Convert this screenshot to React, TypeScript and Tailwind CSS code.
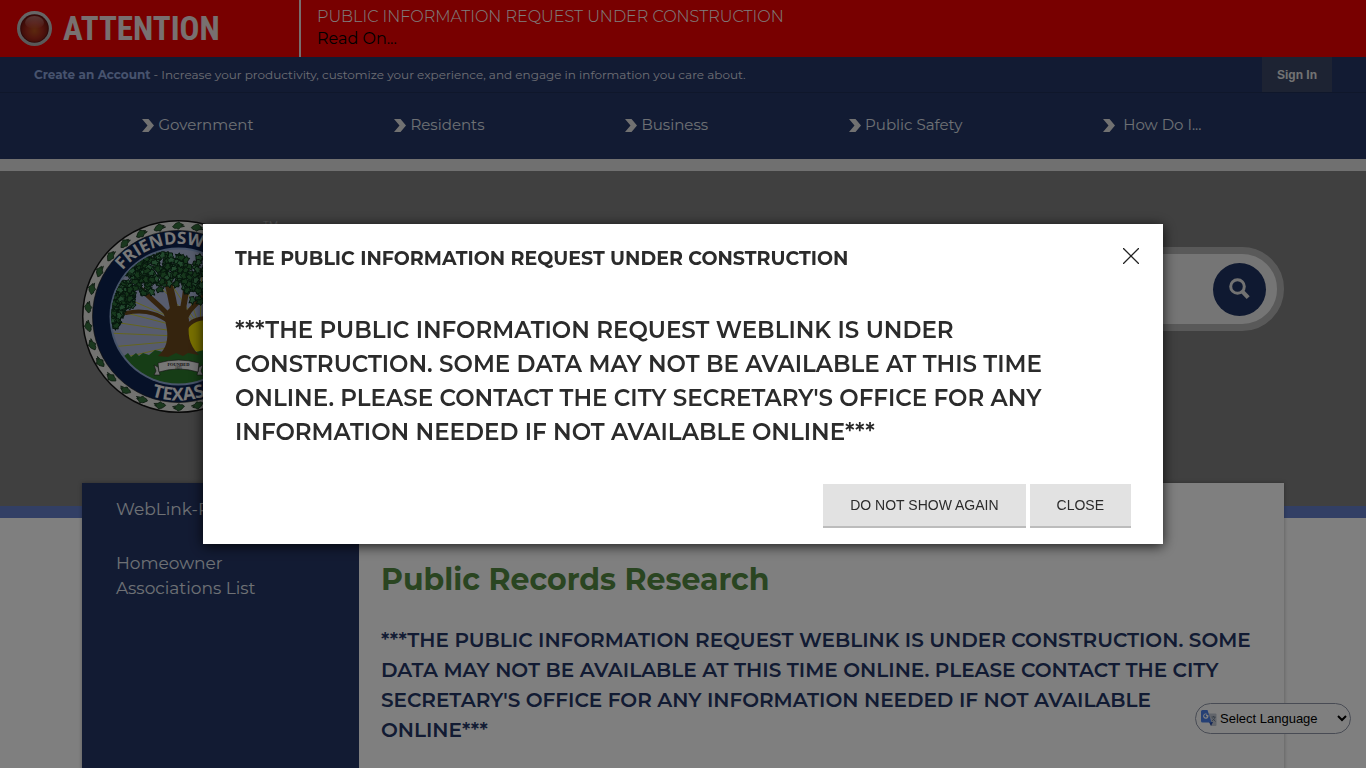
import React from "react";

const navItems = ["Government", "Residents", "Business", "Public Safety", "\u00a0How Do I..."];

const seeded = (seed: number) => {
  let s = seed;
  return () => {
    s = (s * 16807) % 2147483647;
    return s / 2147483647;
  };
};

const canopyShapes = [
  { x: 96, y: 48, rx: 50, ry: 18 },
  { x: 62, y: 56, rx: 28, ry: 18 },
  { x: 78, y: 46, rx: 30, ry: 16 },
  { x: 40, y: 78, rx: 12, ry: 16 },
  { x: 33, y: 95, rx: 6, ry: 11 },
  { x: 124, y: 66, rx: 22, ry: 20 },
  { x: 143, y: 76, rx: 18, ry: 18 },
];

const rand = seeded(77);
const leaves = Array.from({ length: 420 }, (_, i) => {
  const c = canopyShapes[i % canopyShapes.length];
  const a = rand() * Math.PI * 2;
  const r = Math.sqrt(rand());
  return {
    x: Math.round((c.x + Math.cos(a) * c.rx * r) * 10) / 10,
    y: Math.round((c.y + Math.sin(a) * c.ry * r) * 10) / 10,
    turn: Math.round(rand() * 360),
    fill: rand() > 0.45 ? "#2c6e38" : "#45905a",
  };
});

function Seal() {
  return (
    <svg viewBox="0 0 193 193" className="size-[193px] shrink-0" role="img" aria-label="Friendswood Texas city seal">
      <defs>
        <clipPath id="scene">
          <circle cx="96.5" cy="96.5" r="67" />
        </clipPath>
        <path id="arcTop" d="M24 96.5a72.5 72.5 0 0 1 145 0" />
        <path id="arcBottom" d="M12.5 96.5a84 84 0 0 0 168 0" />
      </defs>
      <circle cx="96.5" cy="96.5" r="96.5" fill="#111" />
      <circle cx="96.5" cy="96.5" r="95" fill="#e4e4e0" />
      {Array.from({ length: 30 }, (_, i) => (
        <g key={i} transform={`rotate(${i * 12} 96.5 96.5) translate(96.5 5.8)`}>
          <path d="M-6 1C-4-1-3-3-1-3L0-4 2-2.500 5-1 3-.5 6 .5 2 1.500 0 3.500-2 2.500-4 2.500z" fill="#35703c" stroke="#112b17" strokeWidth=".7" />
        </g>
      ))}
      <circle cx="96.5" cy="96.5" r="86" fill="#0d2350" stroke="#111" strokeWidth=".6" />
      <circle cx="96.5" cy="96.5" r="69" fill="#8fa8d4" />
      <g clipPath="url(#scene)">
        <rect width="193" height="193" fill="#aeb9da" />
        <g stroke="#c9c93c" strokeWidth="1">
          <path d="M118 115L25 101M118 117L25 113M118 119L28 127M118 120L40 138M118 112L25 88M118 110L30 72M118 108L62 50M118 108L80 50M118 108L98 50M118 108L120 50M118 108L150 50" />
        </g>
        <circle cx="122" cy="115" r="18" fill="#f0e000" />
        <path d="M20 137l8-3 3 2 2-5 3 4 3-3 3 4 4-3 3 4 5-4 3 3 4-3 6 2 6-5 8 2 8-3 10 1 8-1 7 3 8-2 4 4 8-3 4 3 5-3 5 4 12-2v50H20z" fill="#2c7a2c" />
        <g fill="none" stroke="#6b481c" strokeLinecap="round">
          <path d="M90 104C80 96 66 88 44 93" strokeWidth="4" />
          <path d="M90 100C82 88 72 82 60 70" strokeWidth="5" />
          <path d="M94 100C92 88 90 76 86 62" strokeWidth="8" />
          <path d="M99 100C101 86 105 74 104 62" strokeWidth="6" />
          <path d="M100 106C104 92 112 86 122 76" strokeWidth="5" />
          <path d="M102 112C106 102 114 98 126 98" strokeWidth="4" />
        </g>
        <path d="M76 136c9-8 10-17 9-26l-3-16 8-8h14l3 14c-1 14-1 24 10 35l-11-2-5 3-7-3-8 4z" fill="#6b481c" />
        {leaves.map((l, i) => (
          <path
            key={i}
            d="M-4 0L-2-1.500-1-3.500 1-2 4-2 2.500 0 3.500 2 0 2-2 3.500z"
            transform={`translate(${l.x} ${l.y}) rotate(${l.turn})`}
            fill={l.fill}
            stroke="#0c2a18"
            strokeWidth=".9"
          />
        ))}
        <path d="M72 145l4 2 2 8-6 0 2-4zM121 145l-4 2-2 8 6 0-2-4z" fill="#ddd" stroke="#222" strokeWidth=".6" />
        <path d="M76 143q20.500-6 41 0l-1 9q-19.500-6-39 0z" fill="#eee" stroke="#222" strokeWidth=".6" />
      </g>
      <text x="96.5" y="145.500" fontSize="4.500" fontWeight="700" textAnchor="middle" fill="#222" className="font-['Liberation_Serif',serif]">FOUNDED</text>
      <text x="96.5" y="149" fontSize="3.500" textAnchor="middle" fill="#222" className="font-['Liberation_Serif',serif]">1895</text>
      <g fill="#f2f2f2" fontWeight="700" className="font-['Open_Sans',sans-serif]">
        <text fontSize="17" textAnchor="middle">
          <textPath href="#arcTop" startOffset="50%">FRIENDSWOOD</textPath>
        </text>
        <text fontSize="18" textAnchor="middle">
          <textPath href="#arcBottom" startOffset="50%">TEXAS</textPath>
        </text>
      </g>
    </svg>
  );
}

function AlertBar() {
  return (
    <section className="flex h-[57px] bg-[#f00000]">
      <div className="flex w-[301px] shrink-0 items-center gap-[11px] border-r-2 border-[#f0dcdc] pl-[17px]">
        <svg viewBox="0 0 35 35" className="size-[35px]" aria-hidden="true">
          <defs>
            <radialGradient id="lamp" cx="50%" cy="58%" r="50%">
              <stop offset="0" stopColor="#b8521c" />
              <stop offset=".6" stopColor="#a52a1c" />
              <stop offset="1" stopColor="#7c1810" />
            </radialGradient>
            <linearGradient id="rim" x1="0" y1="0" x2="0" y2="1">
              <stop offset="0" stopColor="#d0d0d0" />
              <stop offset="1" stopColor="#b0b0b0" />
            </linearGradient>
            <linearGradient id="gloss" x1="0" y1="0" x2="0" y2="1">
              <stop offset="0" stopColor="#ffdada" stopOpacity=".45" />
              <stop offset="1" stopColor="#ffdada" stopOpacity="0" />
            </linearGradient>
          </defs>
          <circle cx="17.5" cy="17.5" r="17.5" fill="url(#rim)" />
          <circle cx="17.5" cy="17.5" r="14.300" fill="#5e1010" />
          <circle cx="17.5" cy="17.5" r="13.300" fill="url(#lamp)" />
          <ellipse cx="17.5" cy="11.500" rx="9.500" ry="6.500" fill="url(#gloss)" />
        </svg>
        <strong className="font-['Roboto_Condensed','Open_Sans',sans-serif] text-[33px] leading-none font-bold text-[#f0e0e0]">
          ATTENTION
        </strong>
      </div>
      <div className="flex flex-col pt-[6px] pl-4 text-[16px] leading-[22px]">
        <span className="font-light text-white">PUBLIC INFORMATION REQUEST UNDER CONSTRUCTION</span>
        <a href="#alert" className="text-black">Read On...</a>
      </div>
    </section>
  );
}

function Header() {
  return (
    <header className="bg-[#253666]">
      <div className="flex h-[36px] items-stretch justify-between border-b border-[#1f2e56] px-[34px]">
        <p className="flex items-center text-[12px] text-[#d8dbe4]">
          <span>
            <a href="#account" className="font-bold text-[#8fa6dc]">Create an Account</a> - Increase your productivity, customize your experience, and engage in information you care about.
          </span>
        </p>
        <button className="w-[70px] bg-[#3a4766] font-['Liberation_Sans',Arial,sans-serif] text-[12px] font-bold text-[#e6e6e6]">
          Sign In
        </button>
      </div>
      <nav className="flex h-[66px] items-center justify-around pr-[94px] pb-[2px] pl-[72px] text-[15px] text-[#dde0e8]">
        {navItems.map((label) => (
          <a key={label} href="#nav" className="flex items-center gap-1">
            <svg viewBox="0 0 12 13" className="h-[13px] w-[12px]" aria-hidden="true">
              <path d="M0 0h6.500L12 6.500 6.500 13H0l5.500-6.500z" fill="#e2e2e2" />
            </svg>
            {label}
          </a>
        ))}
      </nav>
      <div className="h-[12px] bg-[#e0e0e0]" />
    </header>
  );
}

function Banner() {
  return (
    <section className="h-[347px] border-b-[12px] border-[#657fcb] bg-[#808080]">
      <div className="mx-auto flex w-[88%] items-start pt-[49px]">
        <Seal />
        <span className="-ml-3 text-[10px] leading-none text-[#b8b8b8]" aria-hidden="true">TM</span>
        <form className="mt-[27px] ml-auto flex h-[84px] w-[600px] items-center rounded-full border-[7px] border-[#b3b3b3] bg-[#ebebeb] pr-[11px]">
          <input aria-label="Search" className="h-full min-w-0 grow bg-transparent px-8 text-lg outline-none" />
          <button type="button" aria-label="Submit search" className="flex size-[53px] shrink-0 items-center justify-center rounded-full bg-[#1e3262]">
            <svg viewBox="0 0 22 22" className="size-[22px]" fill="none" stroke="#e4e4e4" aria-hidden="true">
              <circle cx="8.500" cy="8.500" r="6.800" strokeWidth="3" />
              <path d="M13.200 13.400l6 6.200" strokeWidth="4.200" />
            </svg>
          </button>
        </form>
      </div>
    </section>
  );
}

function Content() {
  return (
    <main className="relative mx-auto -mt-[35px] flex min-h-[600px] w-[88%] bg-white shadow-[0_0_4px_rgba(0,0,0,0.3)]">
      <aside className="w-[277px] shrink-0 bg-[#253666] px-[34px] pt-[14px] text-[17px] leading-[25px] text-[#dfe2ea]">
        <ul className="flex flex-col gap-[29px]">
          <li><a href="#weblink" className="block whitespace-nowrap">WebLink-Public Portal</a></li>
          <li><a href="#hoa">Homeowner<br />Associations List</a></li>
        </ul>
      </aside>
      <article className="grow pt-[77px] pl-[22px]">
        <h1 className="text-[30px] leading-[40px] font-bold text-[#558a42]">Public Records Research</h1>
        <h2 className="mt-[25px] text-[20px] leading-[30px] font-semibold whitespace-nowrap text-[#253666]">
          ***THE PUBLIC INFORMATION REQUEST WEBLINK IS UNDER CONSTRUCTION. SOME<br />
          DATA MAY NOT BE AVAILABLE AT THIS TIME ONLINE. PLEASE CONTACT THE CITY<br />
          SECRETARY'S OFFICE FOR ANY INFORMATION NEEDED IF NOT AVAILABLE<br />
          ONLINE***
        </h2>
      </article>
    </main>
  );
}

function LanguagePicker() {
  return (
    <div className="fixed right-[15px] bottom-[34px] h-[31px] w-[156px]">
      <select aria-label="Select Language" className="h-full w-full rounded-full border border-[#9097a8] bg-white pr-0 pl-5 font-['Liberation_Sans',Arial,sans-serif] text-[13px] text-black">
        <option>Select Language</option>
      </select>
      <svg viewBox="0 0 16 16" className="pointer-events-none absolute top-[7px] left-[6px] size-[16px]" aria-hidden="true">
        <path d="M6 3.500h8.500a1 1 0 0 1 1 1V15a1 1 0 0 1-1 1H10z" fill="#c4cbd6" />
        <path d="M8 12h4l-2 4z" fill="#2c50a8" />
        <path d="M1.500 0h5l4 12.500h-9A1.500 1.500 0 0 1 0 11V1.500A1.500 1.500 0 0 1 1.500 0z" fill="#4a80ea" />
        <path d="M7.300 5H5v1.200h1.100A1.500 1.500 0 1 1 5.700 4.800l.8-.8A2.700 2.700 0 1 0 7.500 6z" fill="#fff" />
        <path d="M10.500 7h4M12.500 6v1M14 7c-.5 2-1.500 3-3 4M11.500 8.500l3 3" stroke="#66758c" strokeWidth=".8" fill="none" />
      </svg>
    </div>
  );
}

function Dialog() {
  return (
    <div className="fixed inset-0 flex items-center justify-center bg-black/50">
      <div role="dialog" aria-modal="true" aria-labelledby="dialog-title" className="w-[960px] max-w-full bg-white px-8 pb-4 text-[#2b2b2b] shadow-[0_2px_12px_rgba(0,0,0,0.8)]">
        <div className="-mr-2 flex items-start justify-between pt-6">
          <h2 id="dialog-title" className="text-[19px] leading-[22px] font-bold">THE PUBLIC INFORMATION REQUEST UNDER CONSTRUCTION</h2>
          <button aria-label="Close dialog" className="flex size-4 items-center justify-center">
            <svg viewBox="0 0 16 16" className="size-4" stroke="#222" strokeWidth="1.300" aria-hidden="true">
              <path d="M0 0l16 16M16 0L0 16" />
            </svg>
          </button>
        </div>
        <p className="mt-[43px] text-[23px] leading-[34px] font-semibold whitespace-nowrap">
          ***THE PUBLIC INFORMATION REQUEST WEBLINK IS UNDER<br />
          CONSTRUCTION. SOME DATA MAY NOT BE AVAILABLE AT THIS TIME<br />
          ONLINE. PLEASE CONTACT THE CITY SECRETARY'S OFFICE FOR ANY<br />
          INFORMATION NEEDED IF NOT AVAILABLE ONLINE***
        </p>
        <div className="mt-[35px] flex justify-end gap-1 font-['Liberation_Sans',Arial,sans-serif] text-[14px]">
          <button className="h-[44px] border-b-2 border-[#bcbcbc] bg-[#e2e2e2] px-[27px]">DO NOT SHOW AGAIN</button>
          <button className="h-[44px] border-b-2 border-[#bcbcbc] bg-[#e2e2e2] px-[27px]">CLOSE</button>
        </div>
      </div>
    </div>
  );
}

export default function App() {
  return (
    <div className="h-screen overflow-hidden bg-white font-['Montserrat','Inter',sans-serif]">
      <AlertBar />
      <Header />
      <Banner />
      <Content />
      <LanguagePicker />
      <Dialog />
    </div>
  );
}
